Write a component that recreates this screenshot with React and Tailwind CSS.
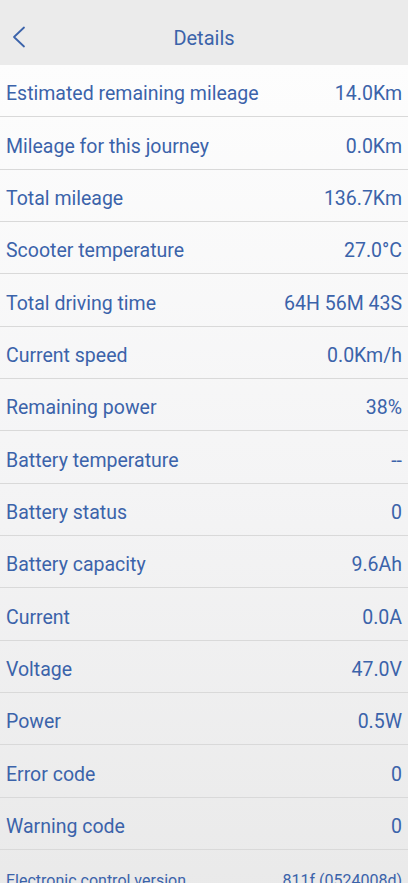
const rows = [
  ["Estimated remaining mileage", "14.0Km"],
  ["Mileage for this journey", "0.0Km"],
  ["Total mileage", "136.7Km"],
  ["Scooter temperature", "27.0°C"],
  ["Total driving time", "64H 56M 43S"],
  ["Current speed", "0.0Km/h"],
  ["Remaining power", "38%"],
  ["Battery temperature", "--"],
  ["Battery status", "0"],
  ["Battery capacity", "9.6Ah"],
  ["Current", "0.0A"],
  ["Voltage", "47.0V"],
  ["Power", "0.5W"],
  ["Error code", "0"],
  ["Warning code", "0"],
];

export default function App() {
  return (
    <div
      className="h-[883px] w-[408px] overflow-hidden text-[#3b63aa] bg-gradient-to-b from-[#f0f0f0] to-[#e8e8e8]"
      style={{ fontFamily: 'Roboto, "Noto Sans", sans-serif' }}
    >
      {/* Header */}
      <div className="relative flex h-[65px] items-center justify-center bg-[#ebebeb] pt-[10px]">
        <svg
          className="absolute left-[12px] top-[26px]"
          width="14"
          height="22"
          viewBox="0 0 14 22"
          fill="none"
          stroke="#3b63aa"
          strokeWidth="1.8"
          strokeLinecap="round"
          strokeLinejoin="round"
        >
          <path d="M12 1.5L2 11l10 9.5" />
        </svg>
        <span className="text-[20px] leading-none">Details</span>
      </div>

      {/* Rows */}
      <div className="bg-gradient-to-b from-[#fdfdfd] via-[#f4f4f5] to-[#e9e9e9]">
        {rows.map(([label, value]) => (
          <div
            key={label}
            className="flex h-[52.33px] items-center justify-between border-b border-[#d9d9d9] px-[6px] pt-[7px] text-[19.5px] leading-none"
          >
            <span>{label}</span>
            <span>{value}</span>
          </div>
        ))}
        <div className="flex h-[60px] items-start justify-between px-[6px] pt-[23px] text-[16px] leading-none">
          <span>Electronic control version</span>
          <span>811f (0524008d)</span>
        </div>
      </div>
    </div>
  );
}
